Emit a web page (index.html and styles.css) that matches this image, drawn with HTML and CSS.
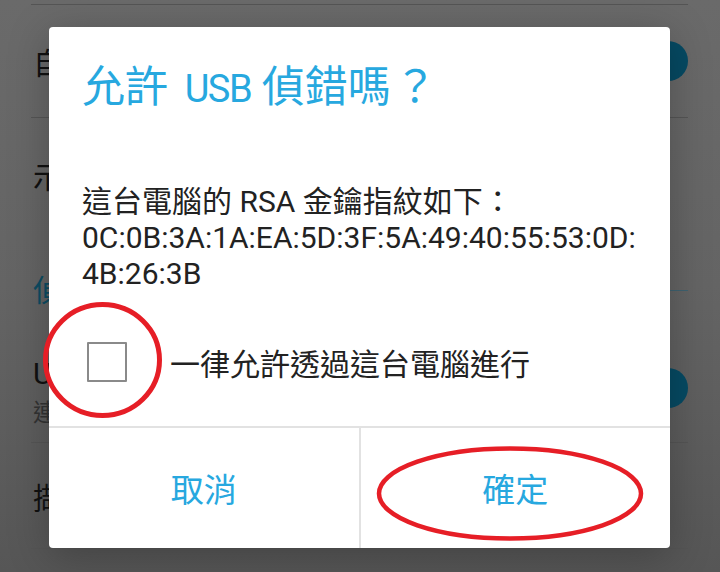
FILE: index.html
```html
<!DOCTYPE html>
<html lang="zh-Hant">
<head>
<meta charset="utf-8">
<title>允許 USB 偵錯嗎？</title>
<link rel="stylesheet" href="styles.css">
</head>
<body>
<div class="screen">
  <div class="settings">
    <div class="sep"></div>
    <div class="row r1"><span class="item">自動系統更新</span><span class="thumb"></span></div>
    <div class="sep"></div>
    <div class="row r2"><span class="item">示範模式</span></div>
    <div class="row header"><span class="cat">偵錯</span><span class="catline"></span></div>
    <div class="row r3">
      <div class="twoline"><span class="item">USB 偵錯</span><span class="sub">連接 USB 後啟用偵錯模式</span></div>
      <span class="thumb"></span>
    </div>
    <div class="sep"></div>
    <div class="row r4"><span class="item">擷取錯誤報告</span></div>
    <div class="sep"></div>
  </div>

  <div class="dialog">
    <div class="title">允許 <span class="lat">USB</span> 偵錯嗎<span class="q">？</span></div>
    <div class="body">這台電腦的 RSA 金鑰指紋如下：<br>0C:0B:3A:1A:EA:5D:3F:5A:49:40:55:53:0D:<br>4B:26:3B</div>
    <div class="check"><span class="box"></span><span class="label">一律允許透過這台電腦進行</span></div>
    <div class="buttons">
      <div class="btn">取消</div>
      <div class="vdiv"></div>
      <div class="btn">確定</div>
    </div>
  </div>

  <svg class="marks" width="720" height="572" viewBox="0 0 720 572">
    <ellipse cx="102.5" cy="360" rx="57" ry="55.5" fill="none" stroke="#e61e26" stroke-width="5"/>
    <ellipse cx="510" cy="493.5" rx="131" ry="45" fill="none" stroke="#e61e26" stroke-width="4.5"/>
  </svg>
</div>
</body>
</html>
```
FILE: styles.css
```css
html, body {
  margin: 0;
  padding: 0;
}
body {
  width: 720px;
  height: 572px;
  overflow: hidden;
  font-family: Roboto, "Noto Sans CJK TC", sans-serif;
}
.screen {
  position: relative;
  width: 720px;
  height: 572px;
  background: linear-gradient(180deg, #6a6a6a 0%, #646464 50%, #565656 100%);
  overflow: hidden;
}
.settings {
  display: flex;
  flex-direction: column;
  padding: 4px 32px 0 31px;
}
.sep {
  height: 1px;
  background: #555;
}
.row {
  display: flex;
  align-items: center;
  justify-content: space-between;
}
.r1 { height: 112px; }
.r2 { height: 113px; }
.header { height: 114px; gap: 10px; }
.r3 { height: 97px; }
.r4 { height: 105px; }
.item {
  font-size: 30px;
  color: #111;
  padding-left: 2px;
  white-space: nowrap;
}
.cat {
  font-size: 30px;
  color: #0d4c62;
  padding-left: 2px;
}
.catline {
  flex: 1;
  height: 1px;
  background: #3f6270;
  margin-top: 4px;
}
.twoline {
  display: flex;
  flex-direction: column;
  margin-top: -10px;
}
.sub {
  font-size: 24px;
  color: #333;
  padding-left: 2px;
  white-space: nowrap;
}
.thumb {
  width: 40px;
  height: 40px;
  border-radius: 50%;
  background: #064a63;
}
.r3 .thumb { margin-top: -12px; }

.dialog {
  position: absolute;
  left: 49px;
  top: 27px;
  width: 621px;
  height: 521px;
  background: #fff;
  border-radius: 4px;
  box-shadow: 0 8px 40px rgba(0,0,0,0.25);
  display: flex;
  flex-direction: column;
  overflow: hidden;
}
.title {
  padding: 33px 33px 0 33px;
  font-size: 43px;
  line-height: 54px;
  color: #27a8df;
  white-space: nowrap;
}
.title .lat {
  font-size: 38px;
  letter-spacing: -1.5px;
  margin-left: 6px;
}
.title .q {
  padding-left: 3px;
}
.body {
  margin-top: 68px;
  padding: 0 33px;
  font-size: 30px;
  line-height: 36px;
  color: #222;
}
.check {
  display: flex;
  align-items: center;
  height: 60px;
  margin-top: 40px;
  padding-left: 38px;
}
.box {
  width: 36px;
  height: 36px;
  border: 2px solid #8a8a8a;
  border-radius: 1px;
  flex: none;
}
.label {
  margin-left: 43px;
  font-size: 30px;
  color: #222;
}
.buttons {
  margin-top: auto;
  height: 120px;
  border-top: 2px solid #e2e2e2;
  display: flex;
}
.btn {
  flex: 1;
  display: flex;
  align-items: center;
  justify-content: center;
  font-size: 33px;
  color: #27a8df;
}
.vdiv {
  width: 2px;
  background: #e2e2e2;
}
.marks {
  position: absolute;
  left: 0;
  top: 0;
  pointer-events: none;
}
```
